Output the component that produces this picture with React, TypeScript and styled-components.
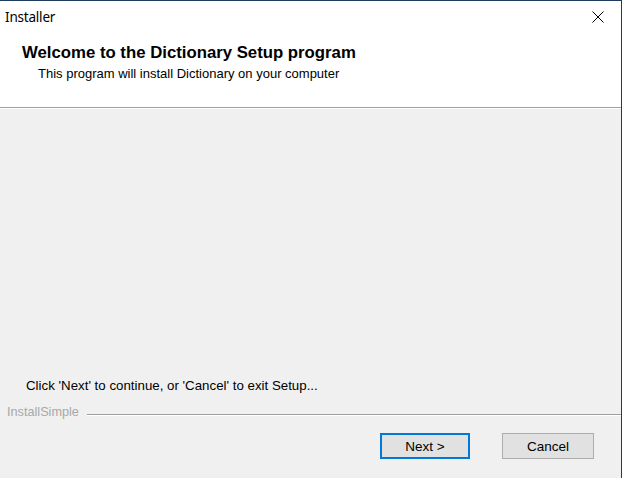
import React from "react";
import styled, { createGlobalStyle } from "styled-components";

const Global = createGlobalStyle`
  html, body { margin: 0; padding: 0; }
  body { width: 622px; height: 478px; overflow: hidden; background: #f0f0f0; }
  #root { width: 622px; height: 478px; }
`;

const Window = styled.div`
  box-sizing: border-box;
  width: 622px;
  height: 478px;
  display: flex;
  flex-direction: column;
  border-top: 1px solid #1d3c5e;
  border-right: 1px solid #1d3c5e;
  background: #f0f0f0;
  font-family: "Liberation Sans", Arial, sans-serif;
  color: #000;
`;

const TitleBar = styled.div`
  height: 32px;
  background: #fff;
  display: flex;
  align-items: center;
  justify-content: space-between;
  padding-left: 5px;
`;

const Title = styled.span`
  font-family: "Noto Sans", "Liberation Sans", sans-serif;
  font-size: 13.5px;
  letter-spacing: -0.2px;
`;

const CloseButton = styled.div`
  width: 46px;
  height: 32px;
  display: flex;
  align-items: center;
  justify-content: center;
`;

const Header = styled.div`
  background: #fff;
  height: 74px;
  padding-left: 22px;
  box-sizing: border-box;
  padding-top: 10px;
`;

const Heading = styled.div`
  font-weight: bold;
  font-size: 16.75px;
  line-height: 19px;
`;

const Sub = styled.div`
  font-size: 13px;
  line-height: 16px;
  margin-top: 4px;
  padding-left: 16px;
`;

const Separator = styled.div`
  height: 1px;
  background: #a0a0a0;
  border-bottom: 1px solid #fff;
`;

const Body = styled.div`
  flex: 1;
  display: flex;
  flex-direction: column;
  justify-content: flex-end;
  padding-bottom: 19px;
`;

const Message = styled.div`
  font-size: 13.3px;
  line-height: 16px;
  padding-left: 26px;
  margin-bottom: 11px;
`;

const Brand = styled.div`
  display: flex;
  align-items: center;
  gap: 8px;
  padding-left: 7px;
`;

const BrandText = styled.span`
  font-size: 12.7px;
  line-height: 14px;
  color: #a8a8a8;
`;

const BrandLine = styled.div`
  flex: 1;
  height: 1px;
  background: #a0a0a0;
  border-bottom: 1px solid #fff;
  margin-top: 5px;
`;

const Buttons = styled.div`
  display: flex;
  justify-content: flex-end;
  gap: 32px;
  padding-right: 27px;
  margin-top: 14px;
`;

const Button = styled.button<{ $default?: boolean }>`
  box-sizing: border-box;
  width: ${(p) => (p.$default ? "90px" : "92px")};
  height: 26px;
  background: #e1e1e1;
  border: ${(p) => (p.$default ? "2px solid #0078d7" : "1px solid #adadad")};
  font-family: "Liberation Sans", Arial, sans-serif;
  font-size: 13.5px;
  color: #000;
  padding: 0;
  margin: 0;
`;

export default function App() {
  return (
    <>
      <Global />
      <Window>
        <TitleBar>
          <Title>Installer</Title>
          <CloseButton>
            <svg width="12" height="12" viewBox="0 0 12 12">
              <path d="M0.5 0.5 L11.5 11.5 M11.5 0.5 L0.5 11.5" stroke="#000" strokeWidth="1" fill="none" />
            </svg>
          </CloseButton>
        </TitleBar>
        <Header>
          <Heading>Welcome to the Dictionary Setup program</Heading>
          <Sub>This program will install Dictionary on your computer</Sub>
        </Header>
        <Separator />
        <Body>
          <Message>Click 'Next' to continue, or 'Cancel' to exit Setup...</Message>
          <Brand>
            <BrandText>InstallSimple</BrandText>
            <BrandLine />
          </Brand>
          <Buttons>
            <Button $default>Next &gt;</Button>
            <Button>Cancel</Button>
          </Buttons>
        </Body>
      </Window>
    </>
  );
}
